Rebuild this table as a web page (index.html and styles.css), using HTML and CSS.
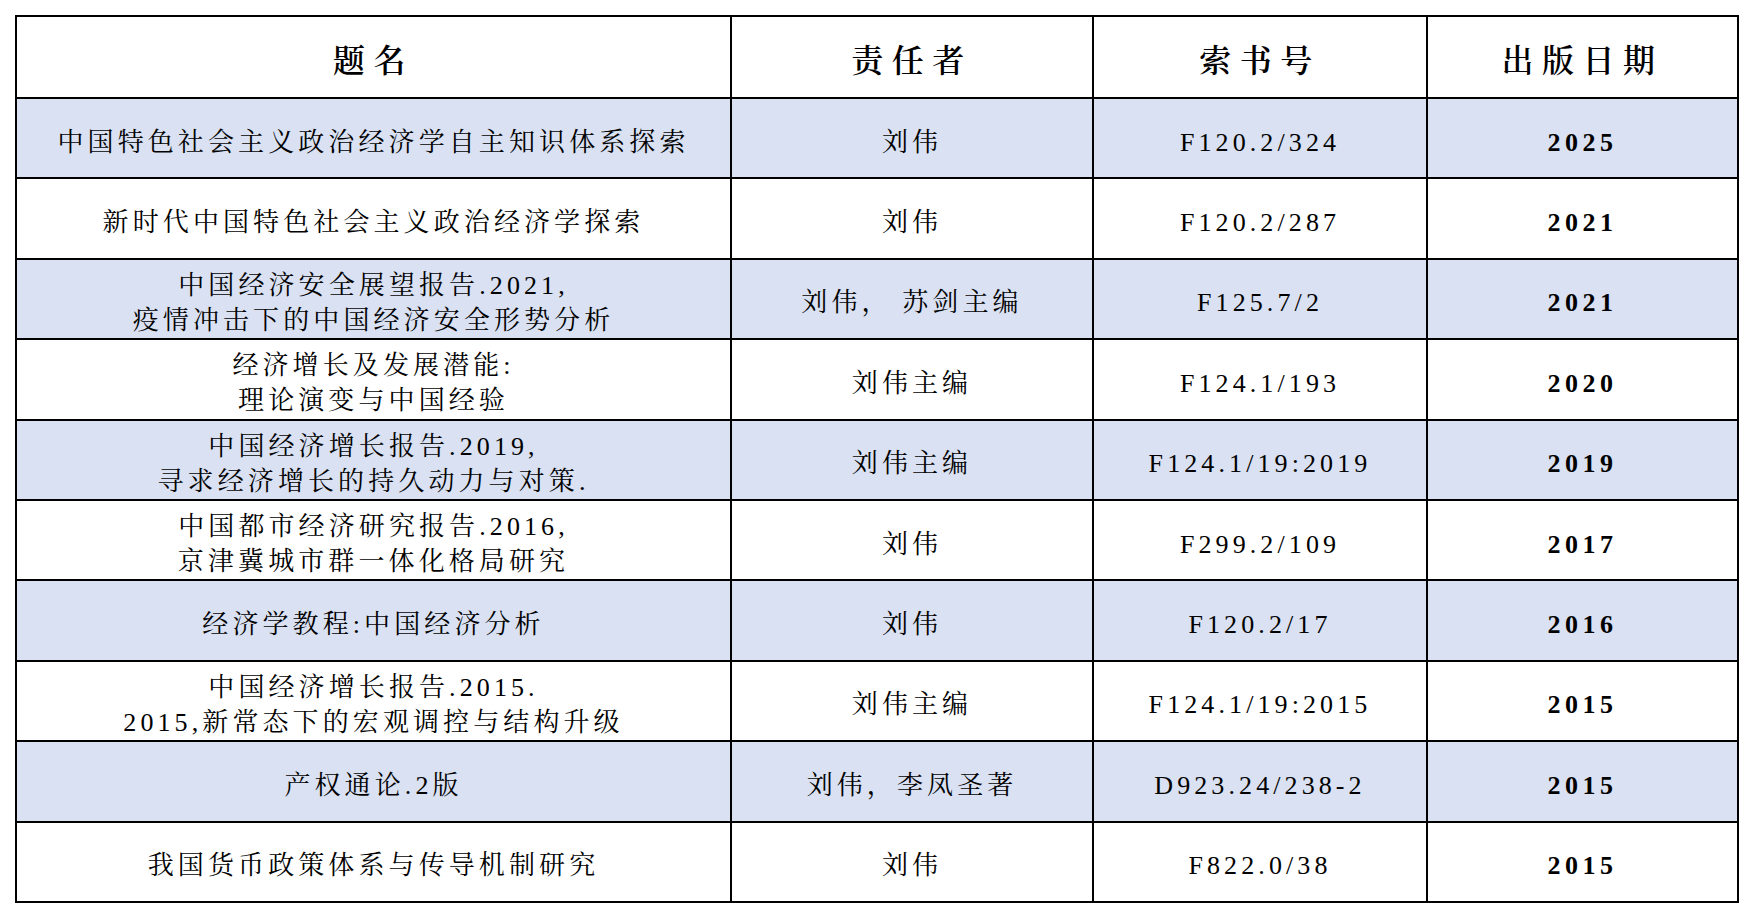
FILE: index.html
```html
<!DOCTYPE html>
<html lang="zh-CN">
<head>
<meta charset="utf-8">
<title>书目</title>
<link rel="stylesheet" href="styles.css">
</head>
<body>
<table class="books">
  <colgroup>
    <col class="c-title">
    <col class="c-author">
    <col class="c-call">
    <col class="c-date">
  </colgroup>
  <thead>
    <tr class="head">
      <th>题名</th>
      <th>责任者</th>
      <th>索书号</th>
      <th>出版日期</th>
    </tr>
  </thead>
  <tbody>
    <tr class="alt">
      <td>中国特色社会主义政治经济学自主知识体系探索</td>
      <td>刘伟</td>
      <td>F120.2/324</td>
      <td class="year">2025</td>
    </tr>
    <tr>
      <td>新时代中国特色社会主义政治经济学探索</td>
      <td>刘伟</td>
      <td>F120.2/287</td>
      <td class="year">2021</td>
    </tr>
    <tr class="alt">
      <td>中国经济安全展望报告.2021,<br>疫情冲击下的中国经济安全形势分析</td>
      <td>刘伟， 苏剑主编</td>
      <td>F125.7/2</td>
      <td class="year">2021</td>
    </tr>
    <tr>
      <td>经济增长及发展潜能:<br>理论演变与中国经验</td>
      <td>刘伟主编</td>
      <td>F124.1/193</td>
      <td class="year">2020</td>
    </tr>
    <tr class="alt">
      <td>中国经济增长报告.2019,<br>寻求经济增长的持久动力与对策.</td>
      <td>刘伟主编</td>
      <td>F124.1/19:2019</td>
      <td class="year">2019</td>
    </tr>
    <tr>
      <td>中国都市经济研究报告.2016,<br>京津冀城市群一体化格局研究</td>
      <td>刘伟</td>
      <td>F299.2/109</td>
      <td class="year">2017</td>
    </tr>
    <tr class="alt">
      <td>经济学教程:中国经济分析</td>
      <td>刘伟</td>
      <td>F120.2/17</td>
      <td class="year">2016</td>
    </tr>
    <tr>
      <td>中国经济增长报告.2015.<br>2015,新常态下的宏观调控与结构升级</td>
      <td>刘伟主编</td>
      <td>F124.1/19:2015</td>
      <td class="year">2015</td>
    </tr>
    <tr class="alt">
      <td>产权通论.2版</td>
      <td>刘伟，李凤圣著</td>
      <td>D923.24/238-2</td>
      <td class="year">2015</td>
    </tr>
    <tr>
      <td>我国货币政策体系与传导机制研究</td>
      <td>刘伟</td>
      <td>F822.0/38</td>
      <td class="year">2015</td>
    </tr>
  </tbody>
</table>
</body>
</html>
```

FILE: styles.css
```css
html, body {
  margin: 0;
  padding: 0;
  background: #ffffff;
}

body {
  padding: 15px 0 0 15px;
  font-family: "Liberation Serif", "Noto Serif CJK SC", "Noto Sans CJK SC", serif;
  color: #000000;
}

.books {
  border-collapse: collapse;
  table-layout: fixed;
  width: 1722px;
  border: 2px solid #000;
}

.c-title { width: 715px; }
.c-author { width: 362px; }
.c-call { width: 334px; }
.c-date { width: 311px; }

.books th,
.books td {
  border: 2px solid #000;
  padding: 0;
  text-align: center;
  vertical-align: middle;
}

.books th {
  height: 73px;
  padding-top: 7px;
  font-size: 32px;
  font-weight: 600;
  letter-spacing: 8.5px;
  line-height: 40px;
}

.books td {
  height: 70.4px;
  padding-top: 8px;
  font-size: 26px;
  letter-spacing: 4.1px;
  line-height: 35px;
  font-weight: 400;
}

.books tr.alt td {
  background: #d9e1f2;
}

.books td.year {
  font-weight: 700;
  letter-spacing: 4.5px;
}
```
